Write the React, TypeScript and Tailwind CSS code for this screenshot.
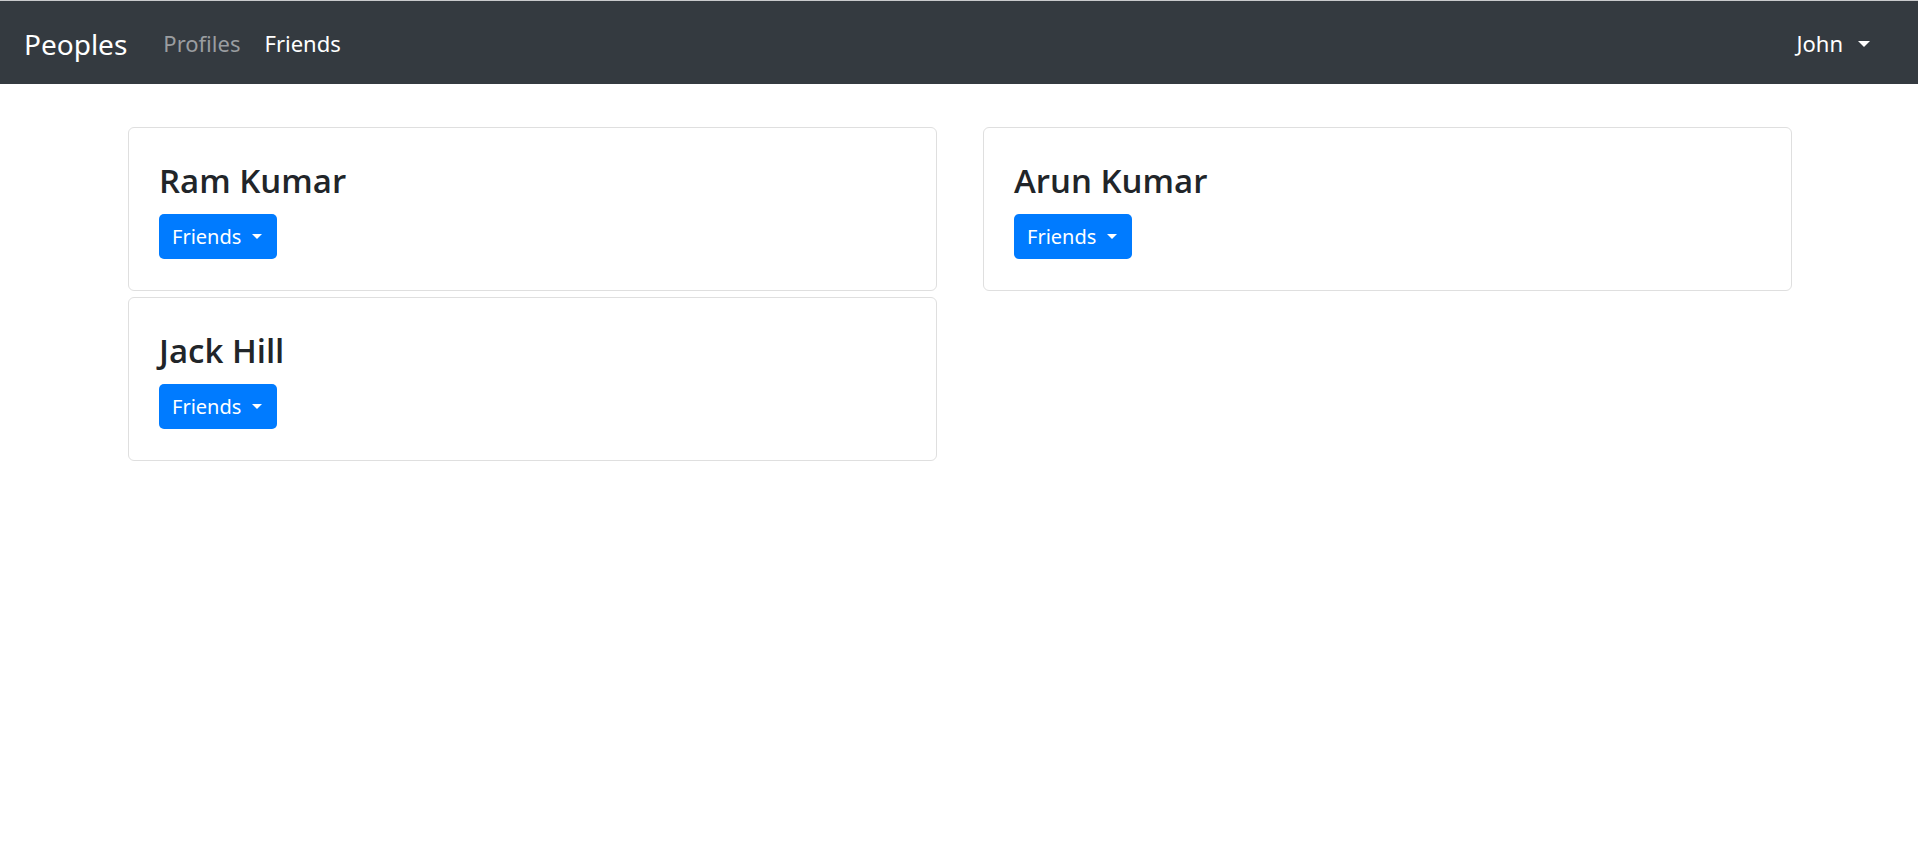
import React from "react";

function Caret({ size = 5 }: { size?: number }) {
  return (
    <span
      className="inline-block w-0 h-0 border-solid border-x-transparent border-b-0 border-t-white"
      style={{ borderTopWidth: size, borderLeftWidth: size, borderRightWidth: size }}
    />
  );
}

function Card({ name }: { name: string }) {
  return (
    <div className="border border-[#dfdfdf] rounded-[6px] bg-white pt-[30px] pb-[31px] px-[30px]">
      <h4 className="font-['Open_Sans','Noto_Sans',sans-serif] text-[33px] leading-[38px] font-semibold text-[#212529] pt-[4px] mb-[14px]">{name}</h4>
      <button className="h-[45px] inline-flex items-center rounded-[5px] bg-[#007bff] text-white text-[20px] pl-[13px] pr-[15px]">
        <span>Friends</span>
        <span className="ml-[11px] flex items-center">
          <Caret size={5} />
        </span>
      </button>
    </div>
  );
}

export default function App() {
  return (
    <div className="min-h-screen bg-white font-['Noto_Sans','Open_Sans',sans-serif]">
      <nav className="h-[84px] bg-[#343a40] border-t border-[#c9cacc] flex items-center pt-[2px] pl-[24px] pr-[48px]">
        <span className="text-[28px] text-white mr-[24px]">Peoples</span>
        <a className="px-[12px] text-[22px] text-[#9a9da0]">Profiles</a>
        <a className="px-[12px] text-[22px] text-white">Friends</a>
        <div className="ml-auto flex items-center text-[22px] text-white">
          <span>John</span>
          <span className="ml-[15px] flex items-center">
            <Caret size={6} />
          </span>
        </div>
      </nav>
      <main className="w-[1664px] ml-[128px] mt-[43px] grid grid-cols-2 gap-x-[46px] items-start">
        <div className="flex flex-col gap-[6px]">
          <Card name="Ram Kumar" />
          <Card name="Jack Hill" />
        </div>
        <div className="flex flex-col gap-[6px]">
          <Card name="Arun Kumar" />
        </div>
      </main>
    </div>
  );
}
